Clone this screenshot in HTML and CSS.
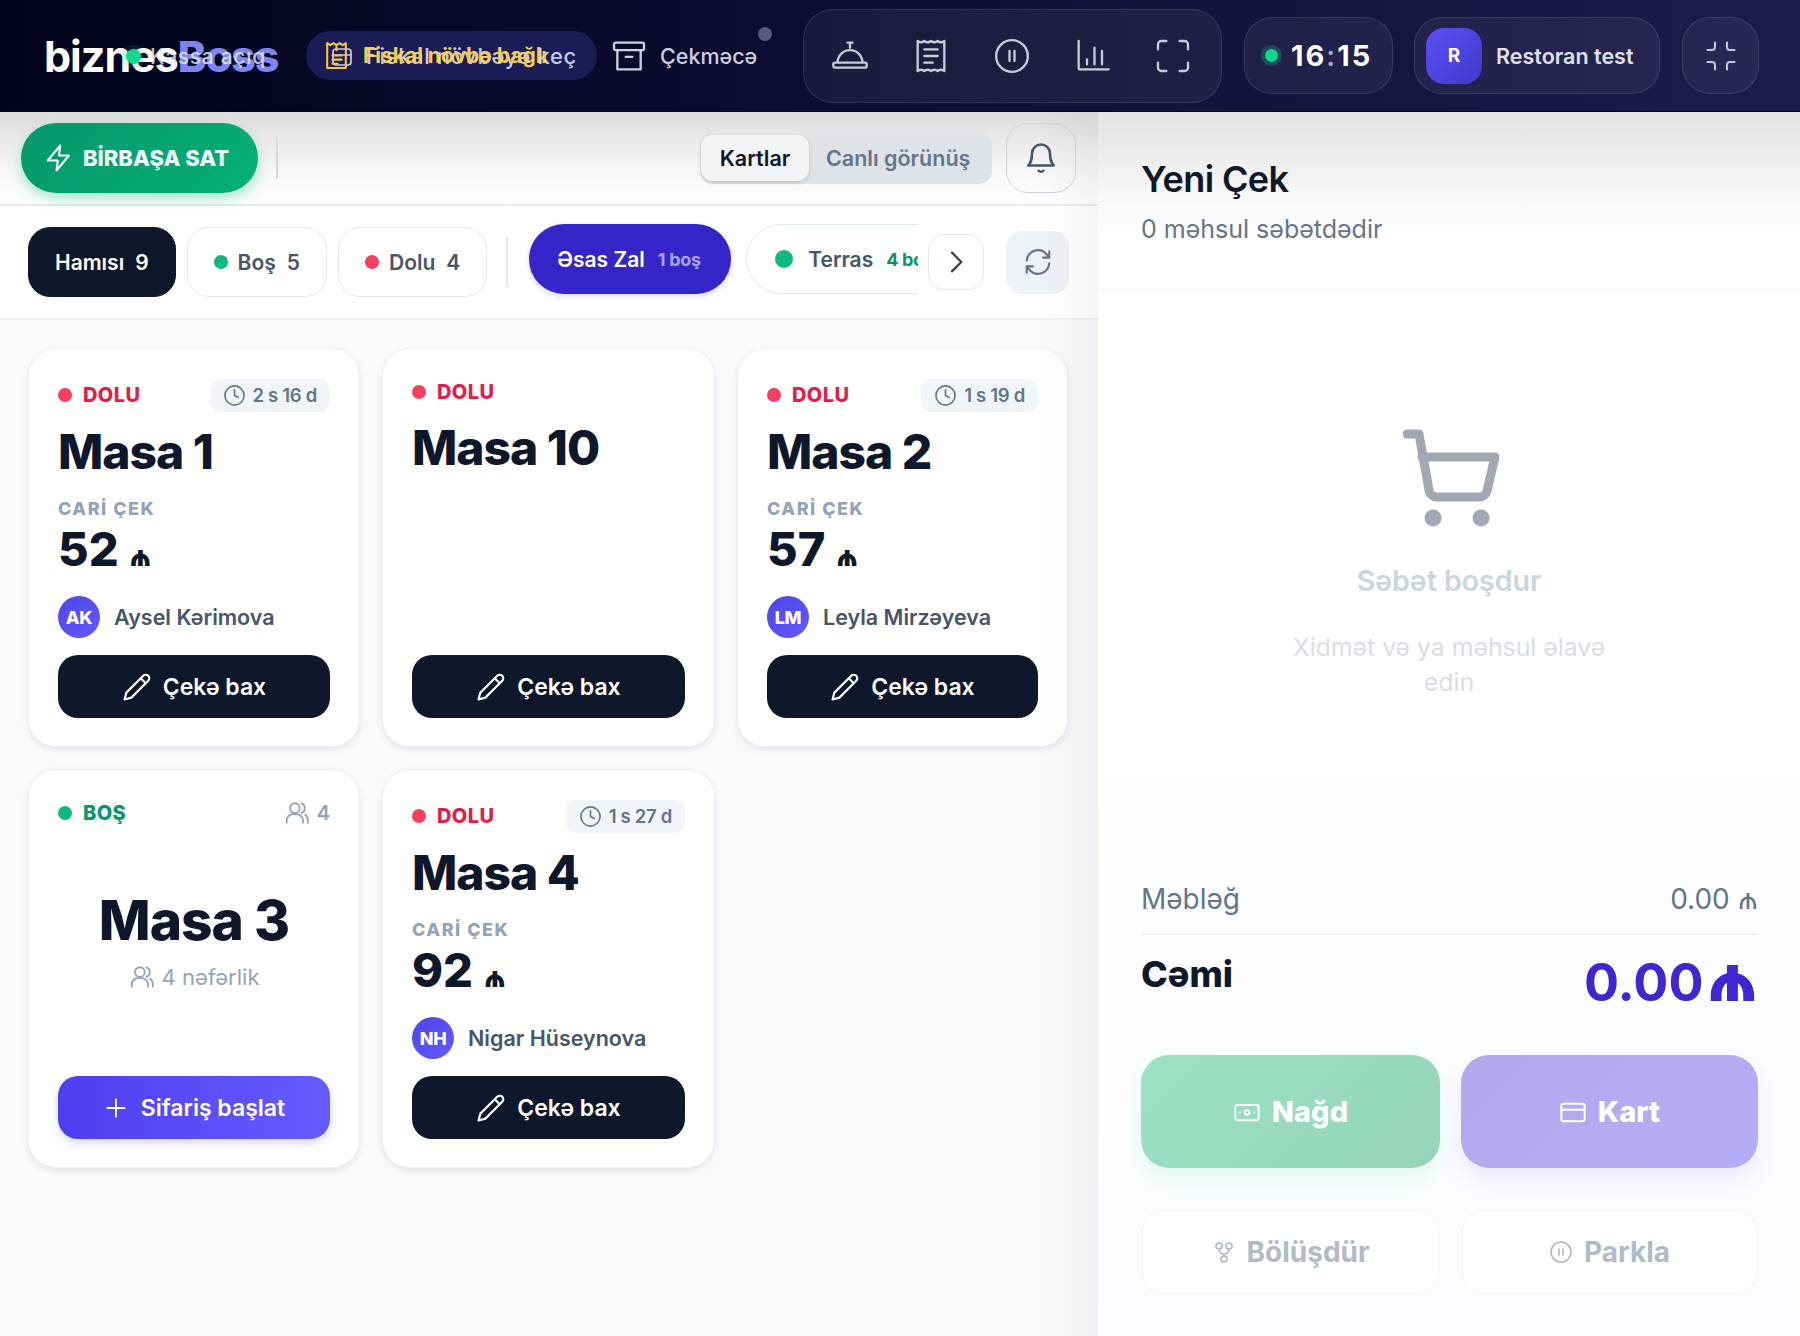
FILE: index.html
```html
<!DOCTYPE html>
<html lang="az">
<head>
  <meta charset="UTF-8" />
  <meta name="viewport" content="width=device-width, initial-scale=1.0"/>
  <title>biznesBoss - Kassa</title>
  <link rel="stylesheet" href="styles.css">
</head>
<body>
  <header class="topbar">
    <div class="logo-wrap">
      <div class="logo">biznes<span>Boss</span></div>
      <div class="kassa"><i></i>Kassa açıq</div>
    </div>
    <div class="shift-pill">
      <svg class="under-icon" viewBox="0 0 24 24"><rect x="3" y="4" width="18" height="16" rx="3"/><path d="M3 10h18"/></svg>
      <svg class="yellow" viewBox="0 0 24 28"><path d="M3 26V2l3 2 3-2 3 2 3-2 3 2 3-2v24z"/><path d="M12 5v4M8 14h9M8 18h9M8 22h5"/></svg>
      <span class="shift-under">Fiskal növbəyə keç</span>
      <span class="shift-over">Fiskal növbə bağlı</span>
    </div>
    <div class="drawer">
      <svg class="ic-40" viewBox="0 0 24 24"><rect x="3" y="4" width="18" height="4.5" rx="1"/><path d="M5 8.500V20h14V8.500M10 12.500h4"/></svg>
      <span>Çekməcə</span>
      <i class="drawer-dot"></i>
    </div>
    <div class="glass icon-group">
      <svg class="ic-40" viewBox="0 0 24 24"><path d="M12 4v3M10.5 4h3M4.500 16a7.500 7.500 0 0 1 15 0M3 16h18a1 1 0 0 1 1 1v1a1 1 0 0 1-1 1H3a1 1 0 0 1-1-1v-1a1 1 0 0 1 1-1z"/></svg>
      <svg class="ic-40" viewBox="0 0 24 24"><path d="M4 3c1.300 1 2.700 1 4 0 1.300 1 2.700 1 4 0 1.300 1 2.700 1 4 0 1.300 1 2.700 1 4 0v18c-1.300-1-2.700-1-4 0-1.300-1-2.700-1-4 0-1.300-1-2.700-1-4 0-1.300-1-2.700-1-4 0zM8 8h8M8 12h8M8 16h5"/></svg>
      <svg class="ic-40" viewBox="0 0 24 24"><circle cx="12" cy="12" r="9.5"/><path d="M10.500 9v6M13.500 9v6"/></svg>
      <svg class="ic-40" viewBox="0 0 24 24"><path d="M4 3v16a1 1 0 0 0 1 1h17M9 17v-3M13.500 17V7M18 17V9"/></svg>
      <svg class="ic-40" viewBox="0 0 24 24"><path d="M8 3H5a2 2 0 0 0-2 2v3M16 3h3a2 2 0 0 1 2 2v3M21 16v3a2 2 0 0 1-2 2h-3M3 16v3a2 2 0 0 0 2 2h3"/></svg>
    </div>
    <div class="glass clock"><i></i><b>16<span>:</span>15</b></div>
    <div class="glass user">
      <div class="user-av">R</div>
      <span>Restoran test</span>
    </div>
    <div class="glass exit">
      <svg class="ic-36" viewBox="0 0 24 24"><path d="M8 3v3a2 2 0 0 1-2 2H3M21 8h-3a2 2 0 0 1-2-2V3M3 16h3a2 2 0 0 1 2 2v3M16 21v-3a2 2 0 0 1 2-2h3"/></svg>
    </div>
  </header>

  <div class="main">
    <section class="left">
      <div class="toolbar">
        <button class="direct-btn">
          <svg viewBox="0 0 24 24"><path d="M13 2L3 14h8l-1 8 10-12h-8z"/></svg>
          BİRBAŞA SAT
        </button>
        <div class="tool-sep"></div>
        <div class="view-switch">
          <div class="view-on">Kartlar</div>
          <div class="view-off">Canlı görünüş</div>
        </div>
        <button class="bell">
          <svg class="ic-36" viewBox="0 0 24 24"><path d="M6 9a6 6 0 0 1 12 0c0 6 2.500 8 2.500 8h-17S6 15 6 9zM10.500 20.500a2 2 0 0 0 3 0"/></svg>
        </button>
      </div>

      <div class="filters">
        <div class="chip chip-dark">Hamısı<span>9</span></div>
        <div class="chip"><i class="dot green"></i>Boş<span>5</span></div>
        <div class="chip"><i class="dot red"></i>Dolu<span>4</span></div>
        <div class="filter-sep"></div>
        <div class="hall hall-on">Əsas Zal<small>1 boş</small></div>
        <div class="hall-clip">
          <div class="hall"><i class="dot green big"></i>Terras<small>4 boş</small></div>
        </div>
        <button class="arrow">
          <svg class="ic-32" viewBox="0 0 24 24"><path d="M9 5l7 7-7 7"/></svg>
        </button>
        <button class="refresh">
          <svg class="ic-30" viewBox="0 0 24 24"><path d="M3 11a9 9 0 0 1 16-5l2 2.500M21 3.500v5h-5M21 13a9 9 0 0 1-16 5l-2-2.500M3 20.500v-5h5"/></svg>
        </button>
      </div>

      <div class="cards">
        <article class="card">
          <div class="card-top">
            <div class="status red-t"><i class="dot red"></i>DOLU</div>
            <div class="timer"><svg class="ic-23" viewBox="0 0 24 24"><circle cx="12" cy="12" r="10"/><path d="M12 6v6l4 2"/></svg>2 s 16 d</div>
          </div>
          <h3>Masa 1</h3>
          <div class="lbl">CARİ ÇEK</div>
          <div class="amount">52<em>₼</em></div>
          <div class="waiter"><div class="avatar">AK</div>Aysel Kərimova</div>
          <button class="btn-dark"><svg viewBox="0 0 24 24"><path d="M17 3a2.800 2.800 0 0 1 4 4L7.500 20.500 2 22l1.500-5.500zM15 5l4 4"/></svg>Çekə bax</button>
        </article>

        <article class="card">
          <div class="card-top short">
            <div class="status red-t"><i class="dot red"></i>DOLU</div>
          </div>
          <h3>Masa 10</h3>
          <div class="grow"></div>
          <button class="btn-dark"><svg viewBox="0 0 24 24"><path d="M17 3a2.800 2.800 0 0 1 4 4L7.500 20.500 2 22l1.500-5.500zM15 5l4 4"/></svg>Çekə bax</button>
        </article>

        <article class="card">
          <div class="card-top">
            <div class="status red-t"><i class="dot red"></i>DOLU</div>
            <div class="timer"><svg class="ic-23" viewBox="0 0 24 24"><circle cx="12" cy="12" r="10"/><path d="M12 6v6l4 2"/></svg>1 s 19 d</div>
          </div>
          <h3>Masa 2</h3>
          <div class="lbl">CARİ ÇEK</div>
          <div class="amount">57<em>₼</em></div>
          <div class="waiter"><div class="avatar">LM</div>Leyla Mirzəyeva</div>
          <button class="btn-dark"><svg viewBox="0 0 24 24"><path d="M17 3a2.800 2.800 0 0 1 4 4L7.500 20.500 2 22l1.500-5.500zM15 5l4 4"/></svg>Çekə bax</button>
        </article>

        <article class="card">
          <div class="card-top short">
            <div class="status green-t"><i class="dot green"></i>BOŞ</div>
            <div class="seats"><svg class="ic-26" viewBox="0 0 24 24"><circle cx="10" cy="7.5" r="4.5"/><path d="M2.500 21v-2a6 6 0 0 1 6-6h3a6 6 0 0 1 6 6v2M16 3.200a4.500 4.500 0 0 1 0 8.600M19.500 13.500a6 6 0 0 1 2.500 5V21"/></svg>4</div>
          </div>
          <div class="empty-table">
            <h3>Masa 3</h3>
            <div class="capacity"><svg class="ic-26" viewBox="0 0 24 24"><circle cx="10" cy="7.5" r="4.5"/><path d="M2.500 21v-2a6 6 0 0 1 6-6h3a6 6 0 0 1 6 6v2M16 3.200a4.500 4.500 0 0 1 0 8.600M19.500 13.500a6 6 0 0 1 2.500 5V21"/></svg>4 nəfərlik</div>
          </div>
          <button class="btn-blue"><svg class="ic-26" viewBox="0 0 24 24"><path d="M12 4v16M4 12h16"/></svg>Sifariş başlat</button>
        </article>

        <article class="card">
          <div class="card-top">
            <div class="status red-t"><i class="dot red"></i>DOLU</div>
            <div class="timer"><svg class="ic-23" viewBox="0 0 24 24"><circle cx="12" cy="12" r="10"/><path d="M12 6v6l4 2"/></svg>1 s 27 d</div>
          </div>
          <h3>Masa 4</h3>
          <div class="lbl">CARİ ÇEK</div>
          <div class="amount">92<em>₼</em></div>
          <div class="waiter"><div class="avatar">NH</div>Nigar Hüseynova</div>
          <button class="btn-dark"><svg viewBox="0 0 24 24"><path d="M17 3a2.800 2.800 0 0 1 4 4L7.500 20.500 2 22l1.500-5.500zM15 5l4 4"/></svg>Çekə bax</button>
        </article>
      </div>
    </section>

    <aside class="right">
      <div class="bill-head">
        <h2>Yeni Çek</h2>
        <p>0 məhsul səbətdədir</p>
      </div>
      <div class="bill-empty">
        <svg class="cart" viewBox="0 0 96 100"><path d="M4 5h12l10 56a8 8 0 0 0 8 7h42a8 8 0 0 0 8-6l8-34H19"/><circle cx="30" cy="89" r="8.5" class="cart-w"/><circle cx="78" cy="89" r="8.5" class="cart-w"/></svg>
        <div class="empty-title">Səbət boşdur</div>
        <div class="empty-sub">Xidmət və ya məhsul əlavə<br>edin</div>
      </div>
      <div class="bill-foot">
        <div class="sum-row"><span>Məbləğ</span><span>0.00 <em>₼</em></span></div>
        <div class="total-row"><b>Cəmi</b><strong>0.00 <em>₼</em></strong></div>
        <div class="pay-grid">
          <button class="pay cash">
            <svg class="ic-28" viewBox="0 0 24 24"><rect x="2" y="6" width="20" height="13" rx="2"/><circle cx="12" cy="12.5" r="2"/><path d="M6 12.500h.01M18 12.500h.01"/></svg>Nağd
          </button>
          <button class="pay card-pay">
            <svg class="ic-28" viewBox="0 0 24 24"><rect x="2" y="5" width="20" height="15" rx="2"/><path d="M2 10h20"/></svg>Kart
          </button>
          <button class="ghost">
            <svg class="ic-24" viewBox="0 0 24 24"><circle cx="7" cy="6" r="3"/><circle cx="17" cy="6" r="3"/><circle cx="12" cy="19" r="3"/><path d="M7 9a5 5 0 0 0 5 5 5 5 0 0 0 5-5M12 14v2"/></svg>Bölüşdür
          </button>
          <button class="ghost">
            <svg class="ic-24" viewBox="0 0 24 24"><circle cx="12" cy="12" r="10"/><path d="M10 9v6M14 9v6"/></svg>Parkla
          </button>
        </div>
      </div>
    </aside>
  </div>
</body>
</html>
```

FILE: styles.css
```css
* {
  box-sizing: border-box;
}
html, body {
  margin: 0;
  padding: 0;
  height: 100%;
  overflow: hidden;
}
body {
  font-family: Inter, 'Noto Sans', sans-serif;
  background: #f8fafc;
  color: #0f172a;
  width: 1800px;
  height: 1336px;
}
button {
  font-family: inherit;
  border: none;
  cursor: pointer;
}
svg {
  fill: none;
  stroke: currentColor;
  stroke-width: 1.7;
  stroke-linecap: round;
  stroke-linejoin: round;
  flex: none;
}
i {
  display: block;
  flex: none;
}
em {
  font-style: normal;
}
.ic-23 { width: 23px; height: 23px; }
.ic-24 { width: 24px; height: 24px; }
.ic-26 { width: 26px; height: 26px; }
.ic-28 { width: 28px; height: 28px; }
.ic-30 { width: 30px; height: 30px; }
.ic-32 { width: 32px; height: 32px; }
.ic-36 { width: 36px; height: 36px; }
.ic-40 { width: 40px; height: 40px; stroke-width: 1.4; }

/* top bar */
.topbar {
  height: 112px;
  background: linear-gradient(90deg, #03041b 0%, #0b0c2e 40%, #1e1b4b 100%);
  display: flex;
  align-items: center;
  padding: 0 43px 0 44px;
  border-bottom: 1px solid #05051a;
}
.logo-wrap {
  position: relative;
  width: 262px;
  flex: none;
}
.logo {
  font-size: 43px;
  font-weight: 700;
  letter-spacing: -1px;
  color: #fff;
  line-height: 48px;
}
.logo span {
  color: #7c85f0;
  font-weight: 800;
}
.kassa {
  position: absolute;
  left: 82px;
  top: 12px;
  display: flex;
  align-items: center;
  font-size: 21px;
  font-weight: 500;
  letter-spacing: 0.7px;
  color: rgba(226, 232, 240, 0.85);
  gap: 9px;
}
.kassa i {
  width: 15px;
  height: 15px;
  border-radius: 50%;
  background: #10d98f;
  box-shadow: 0 0 0 4px rgba(16, 185, 129, 0.15);
}
.shift-pill {
  position: relative;
  width: 291px;
  height: 49px;
  border-radius: 25px;
  background: #1b1c55;
  display: flex;
  align-items: center;
  padding-left: 18px;
  font-size: 21px;
  font-weight: 500;
  flex: none;
}
.yellow {
  color: #f5c842;
  width: 25px;
  height: 29px;
  position: relative;
  stroke-width: 2;
}
.under-icon {
  position: absolute;
  left: 24px;
  top: 14px;
  width: 24px;
  height: 24px;
  color: #c7cbea;
}
.shift-under {
  position: absolute;
  left: 60px;
  color: #c7cbea;
  font-size: 22px;
  letter-spacing: 0.6px;
}
.shift-over {
  position: absolute;
  left: 57px;
  color: #f8cf48;
  font-weight: 700;
}
.drawer {
  position: relative;
  display: flex;
  align-items: center;
  gap: 11px;
  margin-left: 12px;
  width: 194px;
  flex: none;
  color: #cbd0e0;
  font-size: 21.5px;
  font-weight: 500;
}
.drawer-dot {
  position: absolute;
  left: 149px;
  top: -9px;
  width: 14px;
  height: 14px;
  border-radius: 50%;
  background: #5a5b7c;
}
.glass {
  background: rgba(255, 255, 255, 0.055);
  border: 1.5px solid rgba(255, 255, 255, 0.11);
  display: flex;
  align-items: center;
  flex: none;
}
.icon-group {
  width: 419px;
  height: 94px;
  border-radius: 30px;
  justify-content: space-between;
  padding: 0 28px 0 26px;
  color: #c9cad6;
}
.clock {
  width: 149px;
  height: 77px;
  margin-left: 22px;
  border-radius: 28px;
  padding-left: 20px;
  gap: 13px;
}
.clock i {
  width: 13px;
  height: 13px;
  border-radius: 50%;
  background: #10d98f;
  box-shadow: 0 0 0 4px rgba(16, 185, 129, 0.3);
}
.clock b {
  color: #fff;
  font-size: 29px;
  font-weight: 700;
  letter-spacing: 2px;
}
.clock b span {
  color: #a9aac0;
  font-weight: 500;
}
.user {
  width: 246px;
  height: 77px;
  margin-left: 21px;
  border-radius: 28px;
  padding-left: 11px;
  gap: 14px;
  color: #dfe1ec;
  font-size: 21.5px;
  font-weight: 600;
}
.user-av {
  width: 56px;
  height: 56px;
  border-radius: 18px;
  background: linear-gradient(135deg, #5a50f5, #4338ca);
  color: #fff;
  font-weight: 700;
  font-size: 19px;
  display: flex;
  align-items: center;
  justify-content: center;
}
.exit {
  width: 77px;
  height: 77px;
  margin-left: 22px;
  border-radius: 28px;
  justify-content: center;
  color: #c3c5d4;
}
.exit svg {
  stroke-width: 1.4;
}

/* layout */
.main {
  display: flex;
  height: 1224px;
}
.left {
  width: 1098px;
  background: #f8fafc;
  flex: none;
  position: relative;
}
.left::after {
  content: "";
  position: absolute;
  top: 0;
  right: 0;
  bottom: 0;
  width: 60px;
  background: linear-gradient(90deg, rgba(15, 23, 42, 0), rgba(15, 23, 42, 0.045));
  pointer-events: none;
}
.right {
  flex: 1;
  background: linear-gradient(180deg, #fff 0%, #fff 50%, #fafcff 100%);
  display: flex;
  flex-direction: column;
}

/* toolbar */
.toolbar {
  height: 94px;
  display: flex;
  align-items: center;
  padding: 0 22px 0 21px;
  background: linear-gradient(180deg, #dcdcdc 0%, #f4f4f5 55%, #fff 100%);
  border-bottom: 2px solid #e9ebf2;
}
.direct-btn {
  width: 237px;
  height: 70px;
  border-radius: 35px;
  background: linear-gradient(135deg, #049669, #06b078);
  color: #f1fdf8;
  font-size: 22px;
  font-weight: 800;
  display: flex;
  align-items: center;
  justify-content: center;
  gap: 9px;
  box-shadow: 0 6px 14px rgba(16, 185, 129, 0.35);
  padding: 0 6px 0 0;
}
.direct-btn svg {
  width: 30px;
  height: 30px;
}
.tool-sep {
  width: 2px;
  height: 42px;
  background: #d6d8de;
  margin-left: 18px;
}
.view-switch {
  margin-left: auto;
  width: 292px;
  height: 52px;
  border-radius: 14px;
  background: #dfe2e7;
  display: flex;
  align-items: center;
  font-size: 21.5px;
  font-weight: 600;
  margin-right: 14px;
}
.view-on {
  width: 108px;
  height: 46px;
  margin-left: 1px;
  border-radius: 12px;
  background: #f3f4f5;
  color: #0f172a;
  display: flex;
  align-items: center;
  justify-content: center;
  box-shadow: 0 2px 4px rgba(15, 23, 42, 0.14);
}
.view-off {
  color: #64748b;
  margin-left: 17px;
}
.bell {
  width: 70px;
  height: 70px;
  border-radius: 22px;
  background: transparent;
  border: 1.5px solid #cfd3da;
  color: #475569;
  display: flex;
  align-items: center;
  justify-content: center;
  padding: 0;
}

/* filter row */
.filters {
  height: 114px;
  display: flex;
  align-items: center;
  padding: 0 28px;
  background: #fff;
  border-bottom: 2px solid #eef0f5;
}
.chip {
  height: 70px;
  padding: 0 26px;
  border-radius: 22px;
  border: 1.5px solid #e2e8f0;
  background: #fff;
  display: flex;
  align-items: center;
  font-size: 21px;
  font-weight: 600;
  color: #475569;
  margin-right: 11px;
  flex: none;
}
.chip span {
  margin-left: 11px;
}
.chip-dark {
  background: #0f172a;
  border-color: #0f172a;
  color: #fff;
}
.dot {
  width: 14px;
  height: 14px;
  border-radius: 50%;
}
.dot.big {
  width: 18px;
  height: 18px;
}
.green { background: #10b981; }
.red { background: #f43f5e; }
.chip .dot {
  margin-right: 10px;
}
.filter-sep {
  width: 2px;
  height: 50px;
  background: #e2e8f0;
  margin: 0 21px 0 8px;
  flex: none;
}
.hall {
  height: 70px;
  border-radius: 35px;
  display: flex;
  align-items: center;
  font-size: 21px;
  font-weight: 600;
  flex: none;
  margin-top: -6px;
}
.hall small {
  font-size: 18px;
  font-weight: 700;
  margin-left: 13px;
  letter-spacing: -0.3px;
}
.hall-on {
  width: 202px;
  background: #3525c9;
  color: #fff;
  padding-left: 28px;
  box-shadow: 0 2px 6px rgba(53, 37, 201, 0.2);
}
.hall-on small {
  color: #a8a3f5;
}
.hall-clip {
  width: 172px;
  margin: -6px 0 0 15px;
  overflow: hidden;
  flex: none;
}
.hall-clip .hall {
  width: 230px;
  margin-top: 0;
  border: 1.5px solid #e2e8f0;
  padding-left: 28px;
  color: #475569;
}
.hall-clip .dot {
  margin-right: 15px;
}
.hall-clip small {
  color: #059669;
}
.arrow {
  width: 56px;
  height: 56px;
  margin: 0 0 0 10px;
  border-radius: 16px;
  background: #fff;
  border: 1.5px solid #e2e8f0;
  color: #334155;
  display: flex;
  align-items: center;
  justify-content: center;
  padding: 0;
  flex: none;
}
.refresh {
  width: 63px;
  height: 63px;
  margin: 0 1px 0 auto;
  border-radius: 16px;
  background: #eef1f6;
  color: #64748b;
  display: flex;
  align-items: center;
  justify-content: center;
  padding: 0;
  flex: none;
}

/* table cards */
.cards {
  display: grid;
  grid-template-columns: 332px 333px 331px;
  grid-template-rows: 399px 399px;
  column-gap: 22px;
  row-gap: 22px;
  padding: 28px 0 0 28px;
}
.card {
  background: #fff;
  border-radius: 28px;
  border: 1.5px solid #eef0f5;
  box-shadow: 0 3px 7px rgba(15, 23, 42, 0.09);
  padding: 29px 29px 28px 29px;
  display: flex;
  flex-direction: column;
}
.card-top {
  display: flex;
  align-items: center;
  justify-content: space-between;
  height: 34px;
}
.card-top.short {
  height: 26px;
  margin-top: 1px;
}
.status {
  display: flex;
  align-items: center;
  font-size: 20px;
  font-weight: 800;
  letter-spacing: 0.4px;
  gap: 11px;
}
.red-t { color: #e11d48; }
.green-t { color: #059669; }
.timer {
  display: flex;
  align-items: center;
  height: 33px;
  padding: 0 13px;
  border-radius: 10px;
  background: #f1f5f9;
  color: #64748b;
  font-size: 18.5px;
  font-weight: 600;
  gap: 7px;
  letter-spacing: -0.3px;
}
.seats {
  display: flex;
  align-items: center;
  gap: 7px;
  color: #94a3b8;
  font-size: 20px;
  font-weight: 600;
}
.card h3 {
  margin: 12px 0 0;
  font-size: 48px;
  line-height: 56px;
  font-weight: 800;
  letter-spacing: -1px;
  color: #0f172a;
}
.card-top.short + h3 {
  margin-top: 15px;
}
.lbl {
  margin-top: 18px;
  font-size: 18px;
  line-height: 22px;
  font-weight: 800;
  letter-spacing: 1.5px;
  color: #94a3b8;
}
.amount {
  margin-top: 4px;
  font-size: 47px;
  line-height: 50px;
  font-weight: 800;
  color: #0f172a;
}
.amount em {
  font-size: 28px;
  margin-left: 11px;
}
.waiter {
  margin-top: 15px;
  display: flex;
  align-items: center;
  gap: 14px;
  font-size: 21.5px;
  font-weight: 600;
  color: #475569;
  height: 42px;
}
.avatar {
  width: 42px;
  height: 42px;
  border-radius: 50%;
  color: #fff;
  font-size: 18px;
  font-weight: 800;
  display: flex;
  align-items: center;
  justify-content: center;
  letter-spacing: -0.3px;
  background: linear-gradient(135deg, #4f46e5, #6259ff);
}
.btn-dark, .btn-blue {
  margin-top: auto;
  height: 63px;
  border-radius: 20px;
  color: #fff;
  font-size: 23px;
  font-weight: 600;
  display: flex;
  align-items: center;
  justify-content: center;
  gap: 11px;
  width: 100%;
  flex: none;
}
.btn-dark {
  background: #0f172a;
}
.btn-dark svg {
  width: 30px;
  height: 30px;
}
.btn-blue {
  background: linear-gradient(90deg, #4f3df0, #645cff);
  box-shadow: 0 4px 10px rgba(79, 70, 229, 0.22);
  gap: 12px;
}
.grow {
  flex: 1;
}
.empty-table {
  flex: 1;
  text-align: center;
  padding-top: 45px;
}
.empty-table h3 {
  font-size: 55px;
  line-height: 66px;
  margin-top: 16px;
}
.capacity {
  margin-top: 11px;
  display: flex;
  align-items: center;
  justify-content: center;
  gap: 7px;
  color: #94a3b8;
  font-size: 22px;
}

/* bill */
.bill-head {
  height: 177px;
  padding: 45px 43px 0;
  background: linear-gradient(180deg, #e2e2e2 0%, #f6f6f6 45%, #fff 70%);
  border-bottom: 1px solid #f4f6f9;
}
.bill-head h2 {
  margin: 0;
  font-size: 36px;
  line-height: 44px;
  font-weight: 600;
  letter-spacing: -0.6px;
  color: #0f172a;
}
.bill-head p {
  margin: 13px 0 0;
  font-size: 25px;
  line-height: 30px;
  color: #64748b;
}
.bill-empty {
  height: 587px;
  text-align: center;
  padding-top: 140px;
}
.cart {
  display: block;
  width: 96px;
  height: 100px;
  margin: 0 auto;
  color: #a2a8b2;
  stroke-width: 9;
  transform: translateX(2px);
}
.cart-w {
  fill: #a2a8b2;
  stroke: none;
}
.empty-title {
  margin-top: 35px;
  font-size: 28.5px;
  line-height: 34px;
  font-weight: 600;
  color: #cbd5e1;
}
.empty-sub {
  margin-top: 32px;
  font-size: 24.8px;
  line-height: 35px;
  color: #d8dee8;
}
.bill-foot {
  padding: 0 42px 0 43px;
}
.sum-row {
  display: flex;
  justify-content: space-between;
  align-items: center;
  font-size: 28px;
  color: #64748b;
  border-bottom: 2px solid #eef2f6;
  padding-bottom: 12px;
  height: 59px;
}
.sum-row em {
  font-size: 28px;
}
.total-row {
  display: flex;
  justify-content: space-between;
  height: 120px;
  padding-top: 15px;
}
.total-row b {
  font-size: 36px;
  line-height: 48px;
  font-weight: 800;
}
.total-row strong {
  font-size: 52px;
  line-height: 64px;
  font-weight: 700;
  color: #4026d3;
  margin-top: -5px;
}
.total-row em {
  font-size: 66px;
  font-weight: 800;
  margin-left: -9px;
}
.pay-grid {
  display: grid;
  grid-template-columns: 299px 297px;
  grid-template-rows: 113px 84px;
  column-gap: 21px;
  row-gap: 42px;
}
.pay, .ghost {
  display: flex;
  align-items: center;
  justify-content: center;
  gap: 11px;
  font-weight: 800;
  font-size: 29px;
  color: #fff;
}
.pay {
  border-radius: 28px;
}
.cash {
  background: linear-gradient(135deg, #9be2c5, #94d4bb);
  box-shadow: 0 12px 24px rgba(16, 185, 129, 0.1);
}
.card-pay {
  background: linear-gradient(135deg, #b2a8ec, #b6adf7);
  box-shadow: 0 12px 24px rgba(79, 70, 229, 0.1);
}
.ghost {
  background: #fff;
  border: 1.5px solid #f1f4f8;
  border-radius: 24px;
  color: #b3bac7;
  font-size: 28px;
  font-weight: 700;
}
```
